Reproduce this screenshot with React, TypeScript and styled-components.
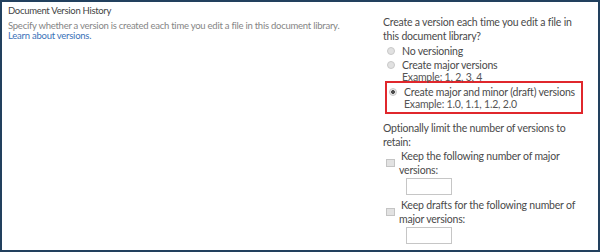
import styled, { createGlobalStyle } from "styled-components";

const GlobalStyle = createGlobalStyle`
  html, body {
    margin: 0;
    padding: 0;
    background: #ffffff;
  }
  body {
    font-family: Lato, "Open Sans", sans-serif;
  }
`;

const Frame = styled.div`
  box-sizing: border-box;
  width: 600px;
  height: 252px;
  border: 2px solid #22405e;
  background: #ffffff;
  display: grid;
  grid-template-columns: 375px 1fr;
  overflow: hidden;
`;

const Intro = styled.div`
  padding: 3px 0 0 6px;
`;

const SectionTitle = styled.div`
  font-size: 9.5px;
  letter-spacing: -0.3px;
  color: #444444;
  line-height: 12px;
  margin-bottom: 4px;
`;

const Description = styled.div`
  font-size: 9.5px;
  letter-spacing: -0.25px;
  line-height: 10px;
  color: #858585;
`;

const Link = styled.a`
  display: block;
  color: #3a72b8;
  text-decoration: none;
`;

const Options = styled.div`
  padding: 13px 0 0 6px;
  font-size: 10.5px;
  letter-spacing: -0.2px;
  line-height: 14px;
  color: #4a4a4a;
`;

const Question = styled.div`
  width: 200px;
`;

const RadioRow = styled.div<{ $highlight?: boolean }>`
  display: flex;
  align-items: flex-start;
  gap: 7px;
  width: 198px;
  box-sizing: border-box;
  line-height: 12px;
  white-space: nowrap;
  padding: ${({ $highlight }) => ($highlight ? "3px 0 2px 2px" : "0 0 0 4px")};
  margin-top: ${({ $highlight }) => ($highlight ? "-2px" : "2px")};
  margin-left: ${({ $highlight }) => ($highlight ? "2px" : "0")};
  border: ${({ $highlight }) => ($highlight ? "2px solid #e0272c" : "none")};
`;

const Radio = styled.span<{ $checked?: boolean }>`
  flex: none;
  box-sizing: border-box;
  width: 8px;
  height: 8px;
  margin-top: 2px;
  border-radius: 50%;
  border: 1px solid #c9c9c9;
  background: ${({ $checked }) =>
    $checked
      ? "radial-gradient(circle, #4d4d4d 0 1.6px, #e6e6e6 2.2px)"
      : "#e1e1e1"};
`;

const Example = styled.div`
  color: #555555;
`;

const Limit = styled.div`
  width: 200px;
  margin-top: 7px;
`;

const CheckRow = styled.div`
  display: flex;
  align-items: center;
  gap: 4px;
  padding-left: 3px;
`;

const CheckBox = styled.span`
  flex: none;
  box-sizing: border-box;
  width: 9px;
  height: 8px;
  border: 1px solid #c4c4c4;
  background: #e2e2e2;
`;

const CheckText = styled.div`
  width: 182px;
  text-indent: 2px;
`;

const NumberInput = styled.input<{ $gap?: number }>`
  display: block;
  box-sizing: border-box;
  width: 46px;
  height: 17px;
  margin: 1px 0 ${({ $gap }) => $gap ?? 0}px 23px;
  padding: 0;
  border: 1px solid #c6c6c6;
  background: #ffffff;
  outline: none;
`;

export default function App() {
  return (
    <>
      <GlobalStyle />
      <Frame>
        <Intro>
          <SectionTitle>Document Version History</SectionTitle>
          <Description>
            Specify whether a version is created each time you edit a file in this document library.
            <Link href="#">Learn about versions.</Link>
          </Description>
        </Intro>
        <Options>
          <Question>Create a version each time you edit a file in this document library?</Question>
          <RadioRow>
            <Radio />
            <div>No versioning</div>
          </RadioRow>
          <RadioRow>
            <Radio />
            <div>
              Create major versions
              <Example>Example: 1, 2, 3, 4</Example>
            </div>
          </RadioRow>
          <RadioRow $highlight>
            <Radio $checked />
            <div>
              Create major and minor (draft) versions
              <Example>Example: 1.0, 1.1, 1.2, 2.0</Example>
            </div>
          </RadioRow>
          <Limit>Optionally limit the number of versions to retain:</Limit>
          <CheckRow>
            <CheckBox />
            <CheckText>Keep the following number of major versions:</CheckText>
          </CheckRow>
          <NumberInput type="text" $gap={3} />
          <CheckRow>
            <CheckBox />
            <CheckText>Keep drafts for the following number of major versions:</CheckText>
          </CheckRow>
          <NumberInput type="text" />
        </Options>
      </Frame>
    </>
  );
}
